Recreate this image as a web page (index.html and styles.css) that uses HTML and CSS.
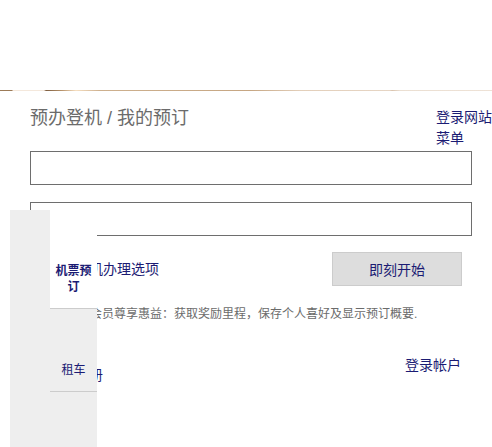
FILE: index.html
```html
<!DOCTYPE html>
<html lang="zh-CN">
<head>
  <meta charset="UTF-8" />
  <meta name="viewport" content="width=device-width, initial-scale=1.0" />
  <title>预办登机 / 我的预订</title>
  <link rel="stylesheet" href="styles.css">
</head>
<body>
  <div class="masthead"></div>
  <div class="gold-rule"></div>

  <header class="head">
    <h1 class="title">预办登机 / 我的预订</h1>
    <nav class="site-nav">
      <a href="#">登录网站</a>
      <a href="#">菜单</a>
    </nav>
  </header>

  <section class="checkin">
    <form class="checkin-form">
      <input type="text" class="field" aria-label="预订编号">
      <input type="text" class="field" aria-label="姓氏">

      <div class="actions">
        <a href="#" class="link">更多的登机办理选项</a>
        <button type="submit" class="btn">即刻开始</button>
      </div>
    </form>

    <p class="perks">注册即成为会员尊享惠益：获取奖励里程，保存个人喜好及显示预订概要.</p>

    <div class="account">
      <a href="#" class="link register">新用户注册</a>
      <a href="#" class="link">登录帐户</a>
    </div>
  </section>

  <aside class="side-tabs">
    <ul>
      <li class="tab active"><a href="#">机票预订</a></li>
      <li class="tab"><a href="#">租车</a></li>
    </ul>
  </aside>
</body>
</html>
```

FILE: styles.css
```css
:root {
  --navy: #1b1b73;
  --grey-text: #6b6b6b;
  --line: #6e6e6e;
  --panel: #eeeeee;
}
body {
  margin: 0;
  font-family: "Liberation Sans", "Noto Sans CJK SC", sans-serif;
  background: #fff;
  color: var(--grey-text);
}
a {
  color: var(--navy);
  text-decoration: none;
}
.masthead {
  height: 90px;
}
.gold-rule {
  height: 1px;
  background: linear-gradient(to right,
    #9c7b58 0, #9c7b58 12px,
    #f4e8dc 13px, #f4e8dc 44px,
    #7d5d40 46px, #b8946c 62px, #f6dfc2 76px,
    #cdb08e 100px, #c6a683 250px,
    #e3cfba 300px, #e6d5c4 390px, #d9c3ad 392px,
    #ebdfd2 400px, #eee2d6 492px);
}
.head {
  display: flex;
  justify-content: space-between;
  align-items: flex-start;
  padding: 16px 0 0 30px;
}
.title {
  margin: 0;
  font-size: 18px;
  font-weight: normal;
  line-height: 22px;
  color: var(--grey-text);
}
.site-nav {
  width: 56px;
  font-size: 14px;
  line-height: 21px;
}
.site-nav a {
  display: block;
  white-space: nowrap;
}
.checkin {
  padding: 2px 20px 0 30px;
}
.field {
  display: block;
  box-sizing: border-box;
  width: 100%;
  height: 34px;
  margin: 0 0 17px;
  border: 1px solid var(--line);
  border-radius: 0;
  background: #fff;
}
.actions {
  display: flex;
  justify-content: space-between;
  align-items: center;
  padding-right: 10px;
  margin-top: -1px;
}
.link {
  font-size: 14px;
  line-height: 20px;
}
.actions .link,
.register {
  padding-left: 3px;
}
.btn {
  width: 130px;
  height: 34px;
  background: #dddddd;
  border: 1px solid #cccccc;
  color: var(--navy);
  font-family: inherit;
  font-size: 14px;
  cursor: pointer;
}
.perks {
  margin: 19px 0 0;
  font-size: 12px;
  line-height: 18px;
}
.account {
  display: flex;
  justify-content: space-between;
  align-items: flex-start;
  padding-right: 11px;
  margin-top: 32px;
}
.register {
  padding-top: 10px;
}
.side-tabs {
  position: fixed;
  left: 10px;
  top: 210px;
  bottom: 0;
  width: 87px;
  background: var(--panel);
}
.side-tabs ul {
  list-style: none;
  margin: 0 0 0 40px;
  padding: 0;
}
.tab {
  padding: 53px 5px 13px;
  border-bottom: 1px solid #cccccc;
  font-size: 12px;
  line-height: 16px;
  text-align: center;
}
.tab.active {
  background: #fff;
  font-weight: bold;
}
```
